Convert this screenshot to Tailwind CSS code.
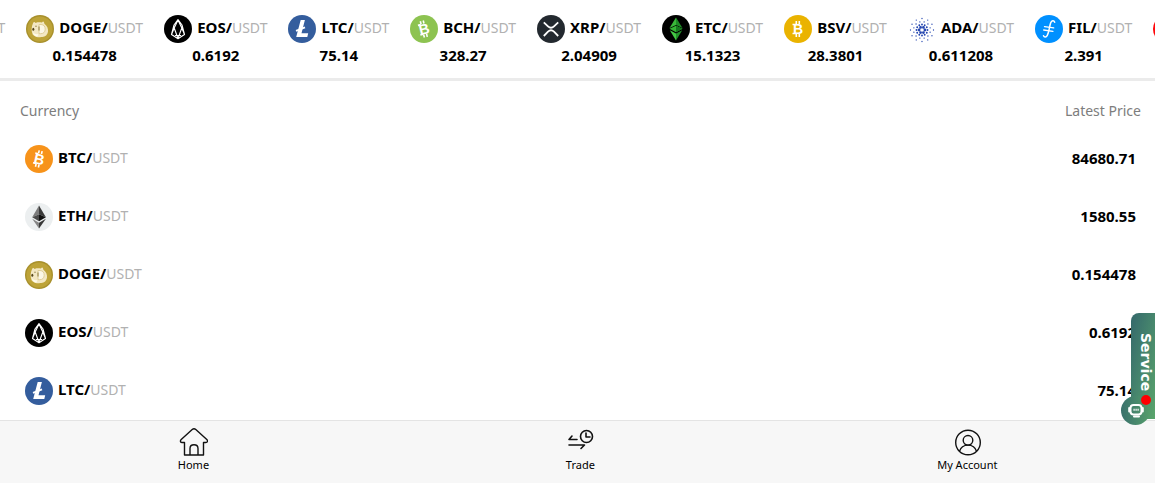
<!DOCTYPE html>
<html lang="en">
<head>
    <meta charset="UTF-8">
    <meta name="viewport" content="width=device-width, initial-scale=1.0">
    <title>Market</title>
    <script src="https://cdn.jsdelivr.net/npm/@tailwindcss/browser@4"></script>
</head>
<body class="bg-white text-black font-['Noto_Sans','Open_Sans',sans-serif]">

    <!-- Coin logos, reused by the ticker and the list -->
    <svg class="hidden" xmlns="http://www.w3.org/2000/svg">
        <symbol id="btc" viewBox="0 0 28 28">
            <circle cx="14" cy="14" r="14" fill="#f7931a"/>
            <g transform="rotate(13 14 14)" fill="#fff" stroke="#fff">
                <path d="M12.3 5.6v3M15.3 5.6v3M12.3 19.4v3M15.3 19.4v3M9 9h3M9 19h3" stroke-width="1.6" fill="none"/>
                <text x="14.2" y="19.2" text-anchor="middle" font-family="Liberation Sans" font-weight="bold" font-size="14.5" stroke="none">B</text>
            </g>
        </symbol>
        <symbol id="eth" viewBox="0 0 28 28">
            <circle cx="14" cy="14" r="14" fill="#eceff0"/>
            <path d="M14 2.5 7.2 14.2 14 11.2z" fill="#7c7c7c"/>
            <path d="M14 2.5v8.7l6.9 3z" fill="#3a3a3a"/>
            <path d="M14 11.2v7L7.2 14.2z" fill="#4a4a4a"/>
            <path d="M14 11.2v7l6.9-4z" fill="#111"/>
            <path d="M7.2 15.7 14 19.7v5.8z" fill="#858585"/>
            <path d="M20.9 15.7 14 19.7v5.8z" fill="#383838"/>
        </symbol>
        <symbol id="doge" viewBox="0 0 28 28">
            <circle cx="14" cy="14" r="14" fill="#a8902c"/>
            <circle cx="14" cy="14" r="12.6" fill="#bda338"/>
            <path d="M7 8.3c.6-1.7 1.5-1.6 2.6-.4 2.2-.7 4.5-.6 6.3-.3 1.1-1.7 2-1.7 2.5 1.2 2.7 2 4 4.7 3.6 8-.5 3-2.6 4.9-5.7 5.3-3.7.5-7.7-.2-9.6-2.7-1.5-3-1.4-7.6.3-11.1z" fill="#f3e8c4"/>
            <path d="M13 9.5h2c3 .2 4.2 2 4.2 4.7 0 3-1.7 4.5-4.7 4.5H13z" fill="#fbf7e6" stroke="#dccb92" stroke-width=".9"/>
            <path d="M6.8 17c1.5 1.9 3.5 2.5 5.5 2l-.8 2.500c-2.400-.2-4.300-1.500-4.700-4.500z" fill="#fffbea"/>
            <ellipse cx="7.3" cy="14.2" rx="1" ry="1.5" fill="#55471c"/>
            <path d="M13 11.5v4" stroke="#8d7c3f" stroke-width="1"/>
            <circle cx="10" cy="11.3" r=".7" fill="#8d7c3f"/>
        </symbol>
        <symbol id="eos" viewBox="0 0 28 28">
            <circle cx="14" cy="14" r="14" fill="#000"/>
            <path d="M14 4.5 10 10 7.5 19.5 14 23.8l6.5-4.3L18 10zM14 5l-3.8 8L14 23.5 17.8 13zM10 13.5 7.5 19.5l3.2 2M18 13.5l2.5 6-3.2 2M11 20.5h6" fill="none" stroke="#fff" stroke-width="1.1" stroke-linejoin="round"/>
        </symbol>
        <symbol id="ltc" viewBox="0 0 28 28">
            <circle cx="14" cy="14" r="14" fill="#345d9d"/>
            <path d="M12.7 5h4.2l-3.4 13.3h6.7l-.9 3.7H8.2z" fill="#fff"/>
            <path d="M8 15.9 17 12.4" stroke="#fff" stroke-width="1.8"/>
        </symbol>
        <symbol id="bch" viewBox="0 0 28 28">
            <circle cx="14" cy="14" r="14" fill="#8dc351"/>
            <g transform="rotate(-14 14 14)" fill="#fff" stroke="#fff">
                <path d="M12.3 5.6v3M15.3 5.6v3M12.3 19.4v3M15.3 19.4v3M9 9h3M9 19h3" stroke-width="1.6" fill="none"/>
                <text x="14.2" y="19.2" text-anchor="middle" font-family="Liberation Sans" font-weight="bold" font-size="14.5" stroke="none">B</text>
            </g>
        </symbol>
        <symbol id="xrp" viewBox="0 0 28 28">
            <circle cx="14" cy="14" r="14" fill="#23292f"/>
            <path d="M6.8 7.3 11 11.4c1.8 1.7 4.2 1.7 6 0l4.2-4.1M6.8 21l4.2-4.3c1.8-1.7 4.2-1.7 6 0l4.2 4.3" fill="none" stroke="#fff" stroke-width="1.8"/>
        </symbol>
        <symbol id="etc" viewBox="0 0 28 28">
            <circle cx="14" cy="14" r="14" fill="#000"/>
            <path d="M14 2.5 7.5 13 14 10z" fill="#3ab83a"/>
            <path d="M14 2.5V10l6.5 3z" fill="#1f8a26"/>
            <path d="m7.5 13.8 6.5-3 6.5 3-6.5 3.5z" fill="#35b435"/>
            <path d="M14 10.8v6.5l6.5-3.5z" fill="#167a1e"/>
            <path d="M7.8 15.2 14 18.6v7z" fill="#44c844"/>
            <path d="M20.2 15.2 14 18.6v7z" fill="#23932b"/>
        </symbol>
        <symbol id="bsv" viewBox="0 0 28 28">
            <circle cx="14" cy="14" r="14" fill="#eab300"/>
            <g fill="#fff" stroke="#fff">
                <path d="M12.3 6v3M15.3 6v3M12.3 19v3M15.3 19v3M8.5 9.5h3M8.5 18.5h3" stroke-width="1.6" fill="none"/>
                <text x="14" y="19" text-anchor="middle" font-family="Liberation Sans" font-weight="bold" font-size="14" stroke="none">B</text>
            </g>
        </symbol>
        <symbol id="ada" viewBox="0 0 28 28">
            <!-- Zero-length dashes with round caps give the dotted rings -->
            <g fill="none" stroke="#2446b0" stroke-linecap="round">
                <circle cx="14" cy="15" r="2.9" pathLength="6" stroke-dasharray="0 1" stroke-width="2.8"/>
                <circle cx="14" cy="15" r="5.5" pathLength="12" stroke-dasharray="0 1" stroke-width="1.9"/>
                <circle cx="14" cy="15" r="8.4" pathLength="12" stroke-dasharray="0 1" stroke-dashoffset=".5" stroke-width="1.4"/>
                <circle cx="14" cy="15" r="11.5" pathLength="12" stroke-dasharray="0 1" stroke-width="1.3"/>
            </g>
        </symbol>
        <symbol id="fil" viewBox="0 0 28 28">
            <circle cx="14" cy="14" r="14" fill="#0090ff"/>
            <path d="M19.7 7.2c-.8-2-3-1.8-4 .6-1.3 3.7-1.5 9-3.4 12.6-1.1 2-3 2.2-3.8.4" fill="none" stroke="#fff" stroke-width="1.5" stroke-linecap="round"/>
            <path d="m9.5 11.6 9.2 1.3M8.7 15l9.2 1.3" stroke="#fff" stroke-width="1.3" stroke-linecap="round"/>
        </symbol>
        <symbol id="trx" viewBox="0 0 28 28">
            <circle cx="14" cy="14" r="14" fill="#ff060a"/>
            <path d="m7 7 11 2 3 3-7.5 10zM7 7l7.5 5.5L18 9m-3.5 3.500L21 12m-6.500.5-1 9.500" fill="none" stroke="#fff"/>
        </symbol>
    </svg>

    <div class="flex min-h-screen flex-col">

        <!-- Ticker -->
        <header class="overflow-hidden border-b-3 border-[#ebebeb]">
            <ul class="-ml-[98px] flex gap-[21px] pt-[15px] pb-[11px] whitespace-nowrap">
                <li class="shrink-0 text-center">
                    <div class="flex h-7 items-center gap-[5px] text-[15px]/6"><svg class="size-7"><use href="#eth"/></svg><p class="pb-1"><b>ETH/</b><span class="text-sm/6 text-[#b1b1b1]">USDT</span></p></div>
                    <p class="text-[15px]/6 font-bold">1580.55</p>
                </li>
                <li class="shrink-0 text-center">
                    <div class="flex h-7 items-center gap-[5px] text-[15px]/6"><svg class="size-7"><use href="#doge"/></svg><p class="pb-1"><b>DOGE/</b><span class="text-sm/6 text-[#b1b1b1]">USDT</span></p></div>
                    <p class="text-[15px]/6 font-bold">0.154478</p>
                </li>
                <li class="shrink-0 text-center">
                    <div class="flex h-7 items-center gap-[5px] text-[15px]/6"><svg class="size-7"><use href="#eos"/></svg><p class="pb-1"><b>EOS/</b><span class="text-sm/6 text-[#b1b1b1]">USDT</span></p></div>
                    <p class="text-[15px]/6 font-bold">0.6192</p>
                </li>
                <li class="shrink-0 text-center">
                    <div class="flex h-7 items-center gap-[5px] text-[15px]/6"><svg class="size-7"><use href="#ltc"/></svg><p class="pb-1"><b>LTC/</b><span class="text-sm/6 text-[#b1b1b1]">USDT</span></p></div>
                    <p class="text-[15px]/6 font-bold">75.14</p>
                </li>
                <li class="shrink-0 text-center">
                    <div class="flex h-7 items-center gap-[5px] text-[15px]/6"><svg class="size-7"><use href="#bch"/></svg><p class="pb-1"><b>BCH/</b><span class="text-sm/6 text-[#b1b1b1]">USDT</span></p></div>
                    <p class="text-[15px]/6 font-bold">328.27</p>
                </li>
                <li class="shrink-0 text-center">
                    <div class="flex h-7 items-center gap-[5px] text-[15px]/6"><svg class="size-7"><use href="#xrp"/></svg><p class="pb-1"><b>XRP/</b><span class="text-sm/6 text-[#b1b1b1]">USDT</span></p></div>
                    <p class="text-[15px]/6 font-bold">2.04909</p>
                </li>
                <li class="shrink-0 text-center">
                    <div class="flex h-7 items-center gap-[5px] text-[15px]/6"><svg class="size-7"><use href="#etc"/></svg><p class="pb-1"><b>ETC/</b><span class="text-sm/6 text-[#b1b1b1]">USDT</span></p></div>
                    <p class="text-[15px]/6 font-bold">15.1323</p>
                </li>
                <li class="shrink-0 text-center">
                    <div class="flex h-7 items-center gap-[5px] text-[15px]/6"><svg class="size-7"><use href="#bsv"/></svg><p class="pb-1"><b>BSV/</b><span class="text-sm/6 text-[#b1b1b1]">USDT</span></p></div>
                    <p class="text-[15px]/6 font-bold">28.3801</p>
                </li>
                <li class="shrink-0 text-center">
                    <div class="flex h-7 items-center gap-[5px] text-[15px]/6"><svg class="size-7"><use href="#ada"/></svg><p class="pb-1"><b>ADA/</b><span class="text-sm/6 text-[#b1b1b1]">USDT</span></p></div>
                    <p class="text-[15px]/6 font-bold">0.611208</p>
                </li>
                <li class="shrink-0 text-center">
                    <div class="flex h-7 items-center gap-[5px] text-[15px]/6"><svg class="size-7"><use href="#fil"/></svg><p class="pb-1"><b>FIL/</b><span class="text-sm/6 text-[#b1b1b1]">USDT</span></p></div>
                    <p class="text-[15px]/6 font-bold">2.391</p>
                </li>
                <li class="shrink-0"><svg class="size-7"><use href="#trx"/></svg></li>
            </ul>
        </header>

        <!-- Price list -->
        <main>
            <table class="w-full">
                <thead>
                    <tr class="h-[49px] text-sm text-[#7d7d7d]">
                        <th class="pt-2.5 pl-5 text-left font-normal">Currency</th>
                        <th class="pt-2.5 pr-3.5 text-right font-normal">Latest Price</th>
                    </tr>
                </thead>
                <tbody>
                    <tr class="h-[58px]">
                        <td class="pl-[25px]"><div class="flex items-center gap-[5px] text-[15px]/6"><svg class="size-7"><use href="#btc"/></svg><p class="pb-1"><b>BTC/</b><span class="text-sm/6 text-[#b1b1b1]">USDT</span></p></div></td>
                        <td class="pr-[19px] pb-0.5 text-right text-[15px]/6 font-bold">84680.71</td>
                    </tr>
                    <tr class="h-[58px]">
                        <td class="pl-[25px]"><div class="flex items-center gap-[5px] text-[15px]/6"><svg class="size-7"><use href="#eth"/></svg><p class="pb-1"><b>ETH/</b><span class="text-sm/6 text-[#b1b1b1]">USDT</span></p></div></td>
                        <td class="pr-[19px] pb-0.5 text-right text-[15px]/6 font-bold">1580.55</td>
                    </tr>
                    <tr class="h-[58px]">
                        <td class="pl-[25px]"><div class="flex items-center gap-[5px] text-[15px]/6"><svg class="size-7"><use href="#doge"/></svg><p class="pb-1"><b>DOGE/</b><span class="text-sm/6 text-[#b1b1b1]">USDT</span></p></div></td>
                        <td class="pr-[19px] pb-0.5 text-right text-[15px]/6 font-bold">0.154478</td>
                    </tr>
                    <tr class="h-[58px]">
                        <td class="pl-[25px]"><div class="flex items-center gap-[5px] text-[15px]/6"><svg class="size-7"><use href="#eos"/></svg><p class="pb-1"><b>EOS/</b><span class="text-sm/6 text-[#b1b1b1]">USDT</span></p></div></td>
                        <td class="pr-[19px] pb-0.5 text-right text-[15px]/6 font-bold">0.6192</td>
                    </tr>
                    <tr class="h-[58px]">
                        <td class="pl-[25px]"><div class="flex items-center gap-[5px] text-[15px]/6"><svg class="size-7"><use href="#ltc"/></svg><p class="pb-1"><b>LTC/</b><span class="text-sm/6 text-[#b1b1b1]">USDT</span></p></div></td>
                        <td class="pr-[19px] pb-0.5 text-right text-[15px]/6 font-bold">75.14</td>
                    </tr>
                </tbody>
            </table>
        </main>

        <!-- Bottom navigation -->
        <nav class="mt-auto flex h-[63px] overflow-hidden border-t border-[#e4e4e4] bg-[#f7f7f7] text-[11px]/4 text-black">
            <a href="#" class="flex w-[33.5%] shrink-0 flex-col items-center pt-1.5">
                <svg class="size-[30px]" viewBox="0 0 30 30" fill="none" stroke="#111" stroke-width="1.4" stroke-linejoin="round"><path d="M6.500 15.500H4.200c-2 0-2.200-1.800-1-2.900L14.200 2.600c1-.9 2.600-.9 3.600 0l11 10c1.200 1.100 1 2.900-1 2.900h-2.300V28h-19zM12 28v-6.500c0-5 8-5 8 0V28"/></svg>
                <span>Home</span>
            </a>
            <a href="#" class="flex w-[33.5%] shrink-0 flex-col items-center pt-1.5">
                <svg class="size-[30px]" viewBox="0 0 30 30" fill="none" stroke="#111" stroke-width="1.6" stroke-linecap="round" stroke-linejoin="round"><circle cx="21.5" cy="9.5" r="6"/><path d="M21 6v4h4M12 12.5H4L7 9M4 18h15.5L16 21.5"/></svg>
                <span>Trade</span>
            </a>
            <a href="#" class="flex w-[33.5%] shrink-0 flex-col items-center pt-1.5">
                <svg class="size-[30px]" viewBox="0 0 30 30" fill="none" stroke="#111" stroke-width="1.4"><circle cx="16" cy="15.5" r="12.3"/><circle cx="16" cy="13.3" r="4.8"/><path d="M7.5 24.3c1.2-4 4.5-6.2 8.5-6.2s7.3 2.2 8.5 6.2"/></svg>
                <span>My Account</span>
            </a>
        </nav>
    </div>

    <!-- Floating support tab -->
    <button type="button" class="fixed right-0 bottom-16 flex h-[106px] w-6 items-center rounded-l-lg bg-linear-to-br from-[#35686b] to-[#5aa56b] pb-2 pl-[7px] font-['DejaVu_Sans',sans-serif] text-sm/4 font-bold text-white">
        <span class="[writing-mode:vertical-rl]">Service</span>
        <span class="absolute -bottom-1.5 -left-2.5 flex size-[29px] items-center justify-center rounded-full bg-linear-to-r from-[#3a716c] to-[#559d6a]">
            <svg class="size-4" viewBox="0 0 16 16" fill="none" stroke="#fff" stroke-width="2" stroke-linejoin="round"><rect x="2.500" y="2" width="11" height="9.500" rx="3"/><path d="M1.200 5v3.500M14.800 5v3.500M6 13.500h5" stroke-linecap="round"/><path d="M5.500 6.800h5.200" stroke-width="2" stroke-dasharray="1.200 .8"/></svg>
            <i class="absolute -top-px -right-px size-2.5 rounded-full bg-[#f00]"></i>
        </span>
    </button>
</body>
</html>
